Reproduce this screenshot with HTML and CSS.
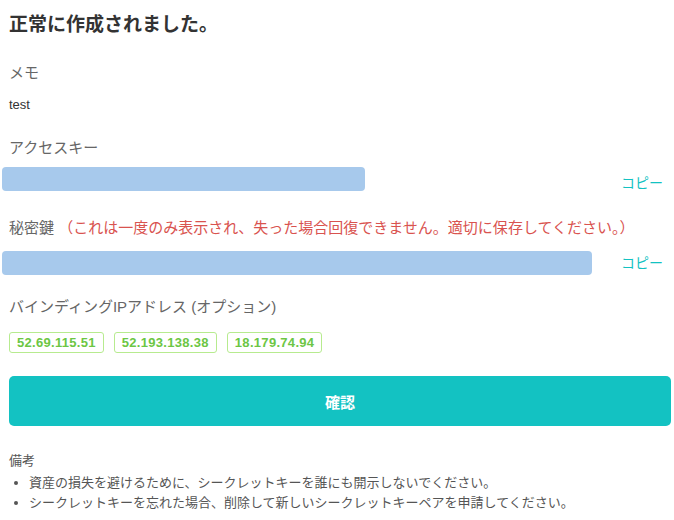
FILE: index.html
```html
<!DOCTYPE html>
<html lang="ja">
<head>
    <meta charset="UTF-8">
    <meta name="viewport" content="width=device-width, initial-scale=1.0">
    <title>アクセスキー作成</title>
    <link rel="stylesheet" href="styles.css">
</head>
<body>
    <div class="container">
        <h1 class="title">正常に作成されました。</h1>

        <div class="label">メモ</div>
        <div class="value">test</div>

        <div class="label label-access">アクセスキー</div>
        <div class="key-row key-row-access">
            <div class="key-bar key-bar-short"></div>
            <a class="copy" href="#">コピー</a>
        </div>

        <div class="label label-secret">秘密鍵 <span class="warn">（これは一度のみ表示され、失った場合回復できません。適切に保存してください。）</span></div>
        <div class="key-row key-row-secret">
            <div class="key-bar key-bar-long"></div>
            <a class="copy" href="#">コピー</a>
        </div>

        <div class="label label-ip">バインディングIPアドレス (オプション)</div>
        <div class="tags">
            <span class="tag">52.69.115.51</span>
            <span class="tag">52.193.138.38</span>
            <span class="tag">18.179.74.94</span>
        </div>

        <button class="confirm">確認</button>

        <div class="notes-title">備考</div>
        <ul class="notes">
            <li>資産の損失を避けるために、シークレットキーを誰にも開示しないでください。</li>
            <li>シークレットキーを忘れた場合、削除して新しいシークレットキーペアを申請してください。</li>
        </ul>
    </div>
</body>
</html>
```

FILE: styles.css
```css
body {
    margin: 0;
    font-family: "Liberation Sans", "Noto Sans CJK JP", sans-serif;
    background-color: #fff;
    color: #333;
}
.container {
    padding: 12px 4px 0 9px;
}
.title {
    margin: 0;
    font-size: 19px;
    line-height: 26px;
    font-weight: bold;
    color: #333;
}
.label {
    margin-top: 24px;
    font-size: 15px;
    line-height: 22px;
    color: #666;
}
.label-access {
    margin-top: 21px;
}
.label-secret {
    margin-top: 26px;
}
.label-ip {
    margin-top: 21px;
}
.warn {
    color: #d9534f;
}
.value {
    margin-top: 10px;
    font-size: 13px;
    line-height: 22px;
    color: #333;
}
.key-row {
    display: flex;
    padding-right: 7px;
    margin-left: -7px;
}
.key-row-access {
    margin-top: 8px;
    align-items: flex-end;
}
.key-row-secret {
    margin-top: 12px;
    align-items: center;
}
.key-bar {
    height: 24px;
    border-radius: 4px;
    background-color: #a7c9ec;
}
.key-bar-short {
    width: 363px;
}
.key-bar-long {
    width: 590px;
}
.copy {
    margin-left: auto;
    font-size: 14px;
    line-height: 16px;
    color: #13c2c2;
    text-decoration: none;
}
.tags {
    display: flex;
    gap: 10px;
    margin-top: 14px;
}
.tag {
    padding: 0 7px;
    border: 1px solid #b7eb8f;
    border-radius: 3px;
    font-size: 13px;
    line-height: 19px;
    font-weight: bold;
    letter-spacing: 0.3px;
    color: #6cc644;
    background-color: #fff;
}
.confirm {
    display: block;
    width: 662px;
    height: 50px;
    margin-top: 23px;
    border: none;
    border-radius: 5px;
    background-color: #13c2c2;
    color: #fff;
    font-family: inherit;
    font-size: 15px;
    font-weight: bold;
    cursor: pointer;
}
.notes-title {
    margin-top: 25px;
    font-size: 13px;
    line-height: 20px;
    color: #555;
}
.notes {
    margin: 2px 0 0;
    padding-left: 20px;
    font-size: 13px;
    line-height: 20px;
    color: #555;
}
```
